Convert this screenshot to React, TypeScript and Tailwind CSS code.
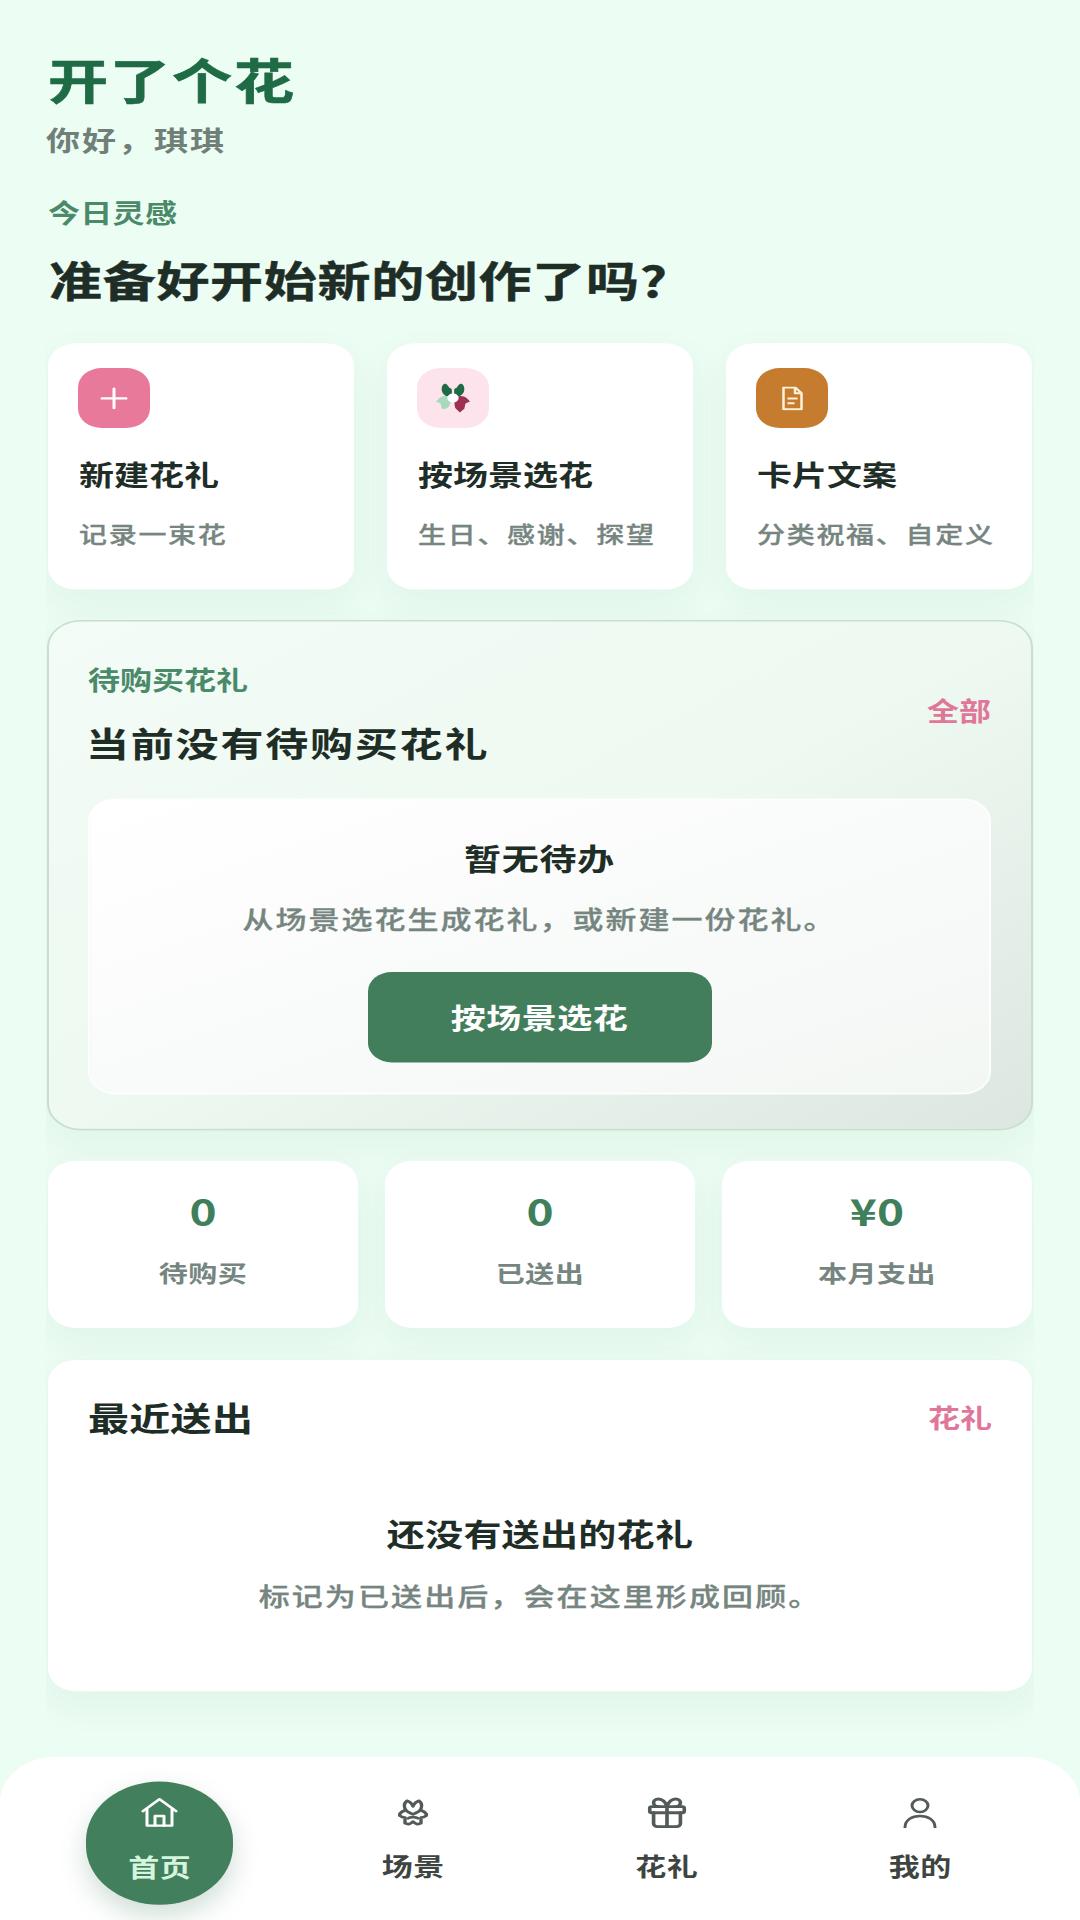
import { Gift } from 'lucide-react'

const font = { fontFamily: '"Noto Sans CJK SC", "Noto Sans", sans-serif' }

function TulipIcon() {
  return (
    <svg viewBox="0 0 30 33" className="h-[38px] w-[34px]">
      <path d="M14 15C8 15 5 11 5 6c0-3 1-5 3-6 2 1 3 3 4 5 1 0 2 1 2 2z" fill="#1f6b45" />
      <path d="M16 15c6 0 9-4 9-9 0-3-1-5-3-6-2 1-3 3-4 5-1 0-2 1-2 2z" fill="#1f6b45" />
      <path d="M13 15c-4-2-8-1-10 1l-3 4 4 2 1 6c3 1 6-1 7-4 1-3 2-6 1-9z" fill="#a9d9bc" />
      <path d="M17 15c4-2 8-1 10 1l3 4-4 2-1 6-4 4-4-5c-1-4-1-8 0-12z" fill="#9c2f52" />
      <circle cx="15" cy="16" r="5" fill="#ffffff" />
    </svg>
  )
}

function OutlineFlower() {
  return (
    <svg viewBox="0 0 30 34" className="h-[36px] w-[30px]" fill="none" stroke="#535b57" strokeWidth="3.400" strokeLinejoin="round" strokeLinecap="round">
      <path d="M15 9c-1-3-3-6-6-7-3 3-3 7-2 10 1 3 4 5 8 7 4-2 7-4 8-7 1-3 1-7-2-10-3 1-5 4-6 7z" />
      <path d="M7 14c-3 1-5 3-6 6 2 2 4 3 6 3l0 7c3 2 6 1 8-2 2 3 5 4 8 2l0-7c2 0 4-1 6-3-1-3-3-5-6-6" />
      <path d="M10 24c2-2 8-2 10 0" />
    </svg>
  )
}

function HomeIcon() {
  return (
    <svg viewBox="0 0 37 37" className="h-[37px] w-[37px]" fill="none" stroke="#ffffff" strokeWidth="3" strokeLinejoin="round" strokeLinecap="round">
      <path d="M2 17 18.500 2 35 17" />
      <path d="M6 15v20h25V15" />
      <path d="M14 35V23h9v12" />
    </svg>
  )
}

function PersonIcon() {
  return (
    <svg viewBox="0 0 34 38" className="h-[38px] w-[34px]" fill="none" stroke="#535b57" strokeWidth="3" strokeLinecap="round">
      <circle cx="17" cy="10" r="8" />
      <path d="M2 37c0-9 7-14 15-14s15 5 15 14" />
    </svg>
  )
}

function FileIcon() {
  return (
    <svg viewBox="0 0 21 30" className="h-[30px] w-[21px]" fill="none" stroke="#fdf1dc" strokeWidth="2.500" strokeLinejoin="round">
      <path d="M1.500 1.500h12l6 7v20h-18z" />
      <path d="M13 1.500v7h6.500" />
      <path d="M5.500 15h10M5.500 21h7" />
    </svg>
  )
}

function PlusIcon() {
  return (
    <svg viewBox="0 0 28 28" className="h-[28px] w-[28px]" stroke="#ffffff" strokeWidth="3" strokeLinecap="round">
      <path d="M14 2v24M2 14h24" />
    </svg>
  )
}

const actions = [
  { title: '新建花礼', desc: '记录一束花', box: 'bg-[#e8799a]', icon: <PlusIcon /> },
  { title: '按场景选花', desc: '生日、感谢、探望', box: 'bg-[#fde4ec]', icon: <TulipIcon /> },
  { title: '卡片文案', desc: '分类祝福、自定义', box: 'bg-[#c67c2e]', icon: <FileIcon /> },
]

const stats = [
  { value: '0', label: '待购买' },
  { value: '0', label: '已送出' },
  { value: '¥0', label: '本月支出' },
]

const cardShadow = 'shadow-[0_16px_40px_rgba(40,100,70,0.06)]'
const muted = 'font-medium text-[#76857f] [-webkit-text-stroke:0.4px_#76857f]'

export default function App() {
  return (
    <div className="h-[1920px] w-[1080px] overflow-hidden bg-[#ecfdf3]" style={font}>
      <div className="flex h-[2400px] origin-top scale-y-[0.8] flex-col">
        <div className="px-12 pt-[59px]">
          <h1 className="text-[60px] leading-[78px] font-bold tracking-[2px] text-[#1f6b45] [-webkit-text-stroke:0.8px_#1f6b45]">开了个花</h1>
          <p className="mt-[16px] -ml-[2px] text-[34px] leading-[44px] font-bold tracking-[2px] text-[#708079]">{'你好\uFF0C琪琪'}</p>
          <p className="mt-[46px] text-[32px] leading-[44px] font-bold tracking-[0.300px] text-[#4a8a68]">今日灵感</p>
          <h2 className="mt-[25px] ml-[1px] text-[53px] leading-[72px] font-bold tracking-[0.700px] text-[#1f2d27] [-webkit-text-stroke:0.6px_#1f2d27]">准备好开始新的创作了吗?</h2>
        </div>

        <div className="mx-[46px] mt-[29px] flex h-[1757px] flex-col overflow-hidden px-[2px] pt-[16px]">
          <div className="grid grid-cols-3 gap-[33px]">
            {actions.map((a) => (
              <div key={a.title} className={`h-[308px] rounded-[28px] bg-white pt-[31px] pl-[31px] ${cardShadow}`}>
                <div className={`-ml-px flex h-[75px] w-[72px] items-center justify-center rounded-[24px] ${a.box}`}>{a.icon}</div>
                <p className="mt-[35px] text-[35px] leading-[46px] font-bold text-[#1f2d27]">{a.title}</p>
                <p className={`mt-[33px] text-[28px] leading-[36px] tracking-[1.700px] ${muted}`}>{a.desc}</p>
              </div>
            ))}
          </div>

          <div className={`mt-[38px] -mx-px h-[638px] rounded-[34px] border-2 border-[#c9ded1] bg-linear-to-br from-[#f3fcf6] via-[#eef9f2] to-[#dbe7e0] pt-[50px] pr-[40px] pl-[39px] ${cardShadow}`}>
            <div className="flex items-center justify-between">
              <div>
                <p className="text-[32px] leading-[44px] font-bold text-[#4a8a68]">待购买花礼</p>
                <p className="mt-[28px] -ml-[2px] text-[43px] leading-[56px] font-bold tracking-[1.800px] text-[#1f2d27]">当前没有待购买花礼</p>
              </div>
              <span className="mb-[8px] text-[32px] leading-[44px] font-bold text-[#e0779a]">全部</span>
            </div>
            <div className="mt-[43px] flex h-[370px] flex-col items-center rounded-[28px] border-2 border-white/80 bg-linear-to-br from-white to-[#f3f7f4] pt-[47px]">
              <p className="text-[37px] leading-[50px] font-bold tracking-[0.800px] text-[#1f2d27]">暂无待办</p>
              <p className={`mt-[31px] text-[31px] leading-[40px] tracking-[2px] ${muted}`}>{'从场景选花生成花礼\uFF0C或新建一份花礼。'}</p>
              <button className="mt-[47px] h-[113px] w-[344px] rounded-[24px] bg-[#437e5c] text-[35px] font-bold tracking-[0.500px] text-white">按场景选花</button>
            </div>
          </div>

          <div className="mt-[38px] grid grid-cols-3 gap-[27px]">
            {stats.map((s) => (
              <div key={s.label} className={`flex h-[209px] flex-col items-center rounded-[28px] bg-white pt-[32px] ${cardShadow}`}>
                <p className="text-[46px] leading-[60px] font-bold text-[#3f7f5c]">{s.value}</p>
                <p className="mt-[28px] text-[29px] leading-[38px] font-bold tracking-[0.500px] text-[#76857f]">{s.label}</p>
              </div>
            ))}
          </div>

          <div className={`mt-[40px] h-[414px] shrink-0 rounded-[28px] bg-white px-[40px] pt-[44px] ${cardShadow}`}>
            <div className="flex items-center justify-between">
              <p className="text-[41px] leading-[54px] font-bold tracking-[0.300px] text-[#1f2d27]">最近送出</p>
              <span className="text-[32px] leading-[44px] font-bold text-[#e0779a]">花礼</span>
            </div>
            <div className="flex flex-col items-center">
              <p className="mt-[93px] text-[38px] leading-[50px] font-bold tracking-[0.300px] text-[#1f2d27]">还没有送出的花礼</p>
              <p className={`mt-[34px] text-[31px] leading-[40px] tracking-[2.100px] ${muted}`}>{'标记为已送出后\uFF0C会在这里形成回顾。'}</p>
            </div>
          </div>
        </div>

        <nav className="mt-auto grid h-[204px] grid-cols-4 rounded-t-[56px] bg-white px-[33px]">
          <div className="flex items-start justify-center pt-[31px]">
            <div className="flex h-[154px] w-[147px] flex-col items-center rounded-full bg-[#427f5c] pt-[20px] shadow-[0_14px_30px_rgba(40,100,70,0.22)]">
              <HomeIcon />
              <span className="mt-[28px] text-[31px] leading-[42px] font-bold tracking-[0.500px] text-[#d6f5de]">首页</span>
            </div>
          </div>
          {[
            { label: '场景', icon: <OutlineFlower /> },
            { label: '花礼', icon: <Gift size={46} strokeWidth={1.900} color="#535b57" /> },
            { label: '我的', icon: <PersonIcon /> },
          ].map((n) => (
            <div key={n.label} className="flex flex-col items-center pt-[50px]">
              <div className="flex h-[40px] items-center">{n.icon}</div>
              <span className="mt-[25px] text-[31px] leading-[42px] font-bold tracking-[0.500px] text-[#3e4441]">{n.label}</span>
            </div>
          ))}
        </nav>
      </div>
    </div>
  )
}
